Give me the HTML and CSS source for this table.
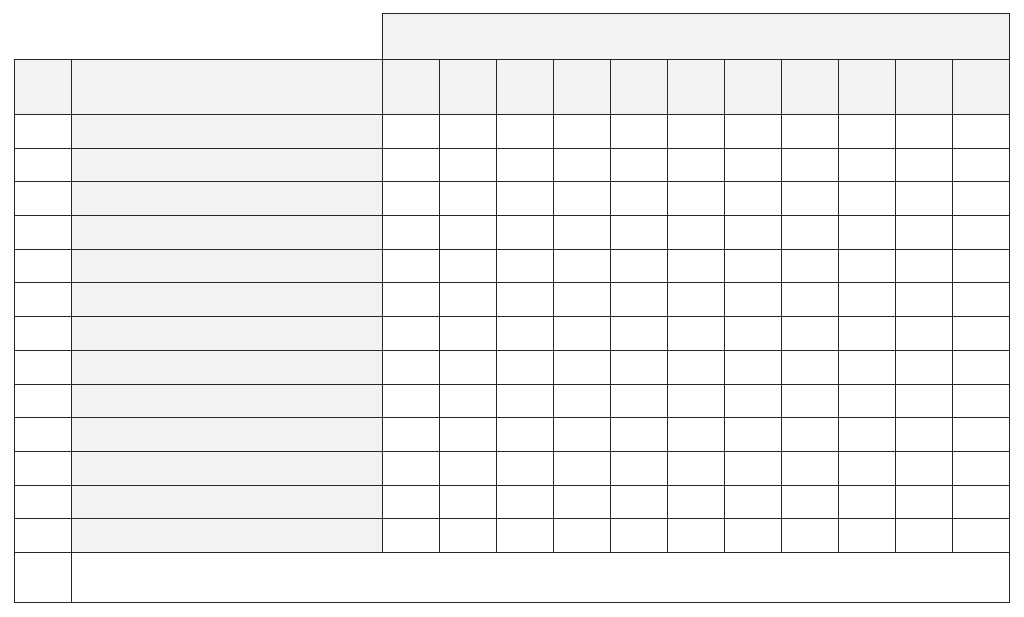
FILE: index.html
```html
<!DOCTYPE html>
<html>
<head>
<meta charset="utf-8">
<link rel="stylesheet" href="styles.css">
</head>
<body>
<div class="sheet">
  <div class="spacer"></div>
  <div class="group"></div>

  <div class="c first shade"></div><div class="c shade"></div>
  <div class="c shade"></div><div class="c shade"></div><div class="c shade"></div><div class="c shade"></div><div class="c shade"></div><div class="c shade"></div><div class="c shade"></div><div class="c shade"></div><div class="c shade"></div><div class="c shade"></div><div class="c shade"></div>

  <div class="c first"></div><div class="c shade"></div><div class="c"></div><div class="c"></div><div class="c"></div><div class="c"></div><div class="c"></div><div class="c"></div><div class="c"></div><div class="c"></div><div class="c"></div><div class="c"></div><div class="c"></div>
  <div class="c first"></div><div class="c shade"></div><div class="c"></div><div class="c"></div><div class="c"></div><div class="c"></div><div class="c"></div><div class="c"></div><div class="c"></div><div class="c"></div><div class="c"></div><div class="c"></div><div class="c"></div>
  <div class="c first"></div><div class="c shade"></div><div class="c"></div><div class="c"></div><div class="c"></div><div class="c"></div><div class="c"></div><div class="c"></div><div class="c"></div><div class="c"></div><div class="c"></div><div class="c"></div><div class="c"></div>
  <div class="c first"></div><div class="c shade"></div><div class="c"></div><div class="c"></div><div class="c"></div><div class="c"></div><div class="c"></div><div class="c"></div><div class="c"></div><div class="c"></div><div class="c"></div><div class="c"></div><div class="c"></div>
  <div class="c first"></div><div class="c shade"></div><div class="c"></div><div class="c"></div><div class="c"></div><div class="c"></div><div class="c"></div><div class="c"></div><div class="c"></div><div class="c"></div><div class="c"></div><div class="c"></div><div class="c"></div>
  <div class="c first"></div><div class="c shade"></div><div class="c"></div><div class="c"></div><div class="c"></div><div class="c"></div><div class="c"></div><div class="c"></div><div class="c"></div><div class="c"></div><div class="c"></div><div class="c"></div><div class="c"></div>
  <div class="c first"></div><div class="c shade"></div><div class="c"></div><div class="c"></div><div class="c"></div><div class="c"></div><div class="c"></div><div class="c"></div><div class="c"></div><div class="c"></div><div class="c"></div><div class="c"></div><div class="c"></div>
  <div class="c first"></div><div class="c shade"></div><div class="c"></div><div class="c"></div><div class="c"></div><div class="c"></div><div class="c"></div><div class="c"></div><div class="c"></div><div class="c"></div><div class="c"></div><div class="c"></div><div class="c"></div>
  <div class="c first"></div><div class="c shade"></div><div class="c"></div><div class="c"></div><div class="c"></div><div class="c"></div><div class="c"></div><div class="c"></div><div class="c"></div><div class="c"></div><div class="c"></div><div class="c"></div><div class="c"></div>
  <div class="c first"></div><div class="c shade"></div><div class="c"></div><div class="c"></div><div class="c"></div><div class="c"></div><div class="c"></div><div class="c"></div><div class="c"></div><div class="c"></div><div class="c"></div><div class="c"></div><div class="c"></div>
  <div class="c first"></div><div class="c shade"></div><div class="c"></div><div class="c"></div><div class="c"></div><div class="c"></div><div class="c"></div><div class="c"></div><div class="c"></div><div class="c"></div><div class="c"></div><div class="c"></div><div class="c"></div>
  <div class="c first"></div><div class="c shade"></div><div class="c"></div><div class="c"></div><div class="c"></div><div class="c"></div><div class="c"></div><div class="c"></div><div class="c"></div><div class="c"></div><div class="c"></div><div class="c"></div><div class="c"></div>
  <div class="c first"></div><div class="c shade"></div><div class="c"></div><div class="c"></div><div class="c"></div><div class="c"></div><div class="c"></div><div class="c"></div><div class="c"></div><div class="c"></div><div class="c"></div><div class="c"></div><div class="c"></div>

  <div class="c first"></div>
  <div class="c footer"></div>
</div>
</body>
</html>
```

FILE: styles.css
```css
html, body {
  margin: 0;
  padding: 0;
  background: #ffffff;
}
body {
  padding: 13px 0 0 14px;
  font-family: "Liberation Sans", Arial, sans-serif;
}
.sheet {
  display: grid;
  width: 996px;
  grid-template-columns: 58px 311px repeat(11, 1fr);
  grid-template-rows: 47px 55px repeat(13, 33.7px) 50px;
}
.spacer {
  grid-column: 1 / 3;
  border-bottom: 1px solid #262626;
}
.group {
  grid-column: 3 / 14;
  background: #f2f2f2;
  border: 1px solid #262626;
  margin-left: -1px;
}
.c {
  border-right: 1px solid #262626;
  border-bottom: 1px solid #262626;
  background: #ffffff;
}
.c.first {
  border-left: 1px solid #262626;
}
.c.shade {
  background: #f2f2f2;
}
.c.footer {
  grid-column: 2 / 14;
}
```
